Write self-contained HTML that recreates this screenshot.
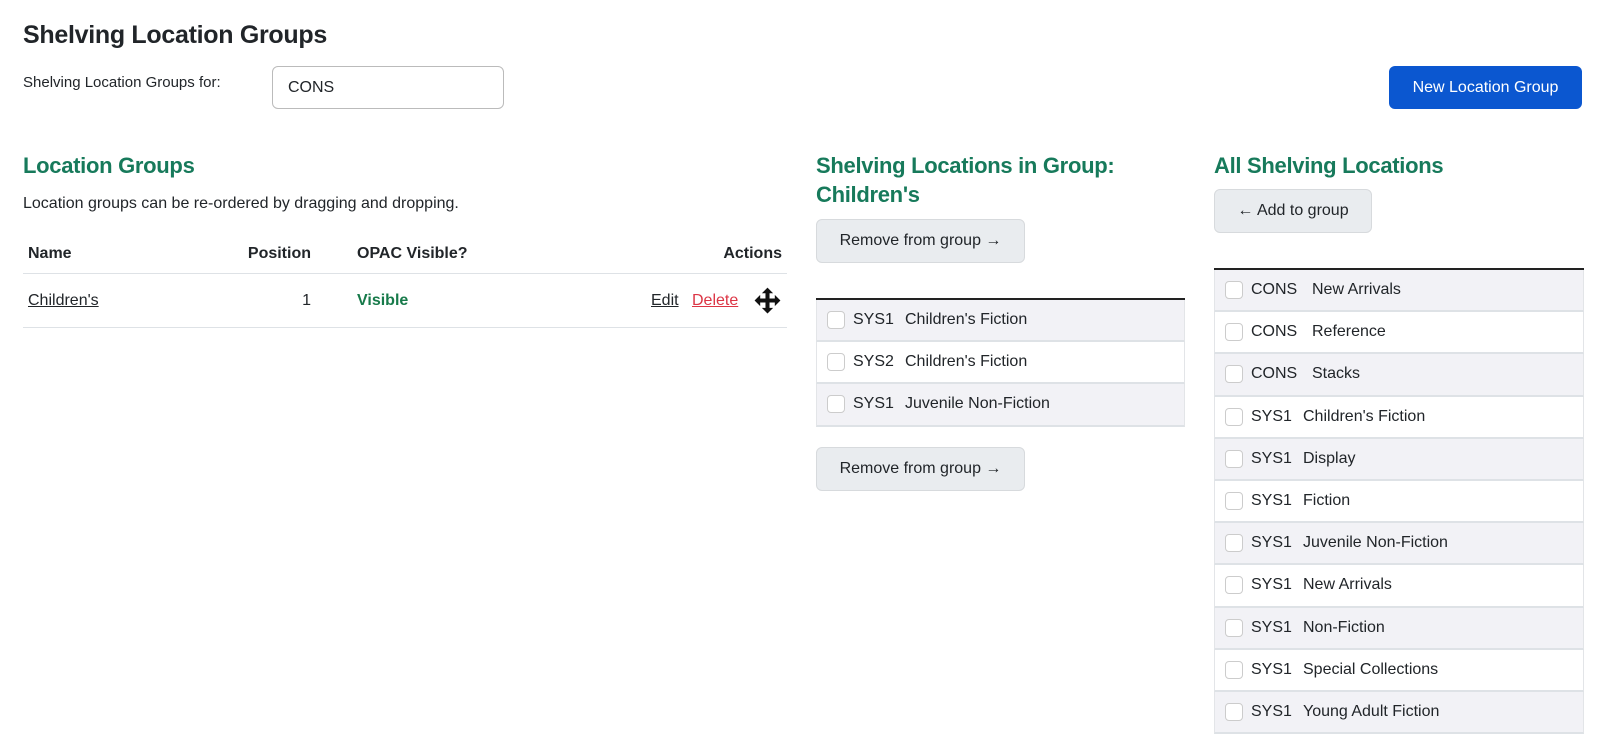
<!DOCTYPE html>
<html><head><style>
*{box-sizing:border-box;margin:0;padding:0}
body{width:1614px;height:720px;overflow:hidden;background:#fff;font-family:"Liberation Sans",sans-serif;color:#212529;position:relative}
.a{position:absolute}
h1{position:absolute;left:23px;top:21px;font-size:25px;font-weight:bold;color:#212529;letter-spacing:-0.3px}
h2{position:absolute;font-size:22px;font-weight:bold;color:#177a5b;line-height:29px;letter-spacing:-0.3px}
.btn{position:absolute;background:#e9ecef;border:1px solid #d7dadd;border-radius:6px;font-size:16px;color:#212529;display:flex;align-items:center;justify-content:center}
.list{position:absolute;border-top:2px solid #222}
.row{height:42.2px;border-bottom:2px solid #dee2e6;border-left:1px solid #e3e5e8;border-right:1px solid #e3e5e8;display:flex;align-items:center;font-size:16px;padding-left:10px}
.row:nth-child(odd){background:#f2f2f6}
.row:nth-child(even){background:#fff}
.cb{width:18px;height:18px;border:1px solid #ccc;border-radius:4px;background:#fff;margin-right:8px}
.c{width:52px}
</style></head><body>
<h1>Shelving Location Groups</h1>
<div class="a" style="left:23px;top:74px;font-size:15px">Shelving Location Groups for:</div>
<div class="a" style="left:272px;top:66px;width:232px;height:43px;border:1px solid #bbb;border-radius:6px;font-size:16px;padding:12px 0 0 15px">CONS</div>
<div class="a" style="left:1389px;top:66px;width:193px;height:43px;background:#0b57d0;border-radius:6px;color:#fff;font-size:16px;display:flex;align-items:center;justify-content:center">New Location Group</div>

<h2 style="left:23px;top:151px">Location Groups</h2>
<div class="a" style="left:23px;top:195px;font-size:16px">Location groups can be re-ordered by dragging and dropping.</div>
<div class="a" style="left:23px;top:273px;width:764px;border-top:1px solid #dee2e6"></div>
<div class="a" style="left:23px;top:327px;width:764px;border-top:1px solid #dee2e6"></div>
<div class="a" style="left:28px;top:245px;font-size:16px;font-weight:bold">Name</div>
<div class="a" style="left:211px;width:100px;text-align:right;top:245px;font-size:16px;font-weight:bold">Position</div>
<div class="a" style="left:357px;top:245px;font-size:16px;font-weight:bold">OPAC Visible?</div>
<div class="a" style="left:682px;width:100px;text-align:right;top:245px;font-size:16px;font-weight:bold">Actions</div>
<div class="a" style="left:28px;top:292px;font-size:16px;text-decoration:underline">Children's</div>
<div class="a" style="left:211px;width:100px;text-align:right;top:292px;font-size:16px">1</div>
<div class="a" style="left:357px;top:292px;font-size:16px;font-weight:bold;color:#177a4a">Visible</div>
<div class="a" style="left:651px;top:292px;font-size:16px;text-decoration:underline">Edit</div>
<div class="a" style="left:692px;top:292px;font-size:16px;text-decoration:underline;color:#dc3545">Delete</div>
<svg class="a" style="left:754px;top:287px" width="27" height="27" viewBox="0 0 24 24"><path d="M12 0.5l5 5h-3.2v4.7h4.7V7l5 5-5 5v-3.2h-4.7v4.7H17l-5 5-5-5h3.2v-4.7H5.5V17l-5-5 5-5v3.2h4.7V5.5H7z" fill="#111"/></svg>

<h2 style="left:816px;top:151px">Shelving Locations in Group:<br>Children's</h2>
<div class="btn" style="left:816px;top:219px;width:209px;height:44px">Remove from group →</div>
<div class="list" style="left:816px;top:298px;width:369px">
<div class="row"><span class="cb"></span><span class="c">SYS1</span>Children's Fiction</div>
<div class="row"><span class="cb"></span><span class="c">SYS2</span>Children's Fiction</div>
<div class="row"><span class="cb"></span><span class="c">SYS1</span>Juvenile Non-Fiction</div>
</div>
<div class="btn" style="left:816px;top:447px;width:209px;height:44px">Remove from group →</div>

<h2 style="left:1214px;top:151px">All Shelving Locations</h2>
<div class="btn" style="left:1214px;top:189px;width:158px;height:44px">← Add to group</div>
<div class="list" style="left:1214px;top:268px;width:370px">
<div class="row"><span class="cb"></span><span style="width:61px">CONS</span>New Arrivals</div>
<div class="row"><span class="cb"></span><span style="width:61px">CONS</span>Reference</div>
<div class="row"><span class="cb"></span><span style="width:61px">CONS</span>Stacks</div>
<div class="row"><span class="cb"></span><span class="c">SYS1</span>Children's Fiction</div>
<div class="row"><span class="cb"></span><span class="c">SYS1</span>Display</div>
<div class="row"><span class="cb"></span><span class="c">SYS1</span>Fiction</div>
<div class="row"><span class="cb"></span><span class="c">SYS1</span>Juvenile Non-Fiction</div>
<div class="row"><span class="cb"></span><span class="c">SYS1</span>New Arrivals</div>
<div class="row"><span class="cb"></span><span class="c">SYS1</span>Non-Fiction</div>
<div class="row"><span class="cb"></span><span class="c">SYS1</span>Special Collections</div>
<div class="row"><span class="cb"></span><span class="c">SYS1</span>Young Adult Fiction</div>
</div>
</body></html>
